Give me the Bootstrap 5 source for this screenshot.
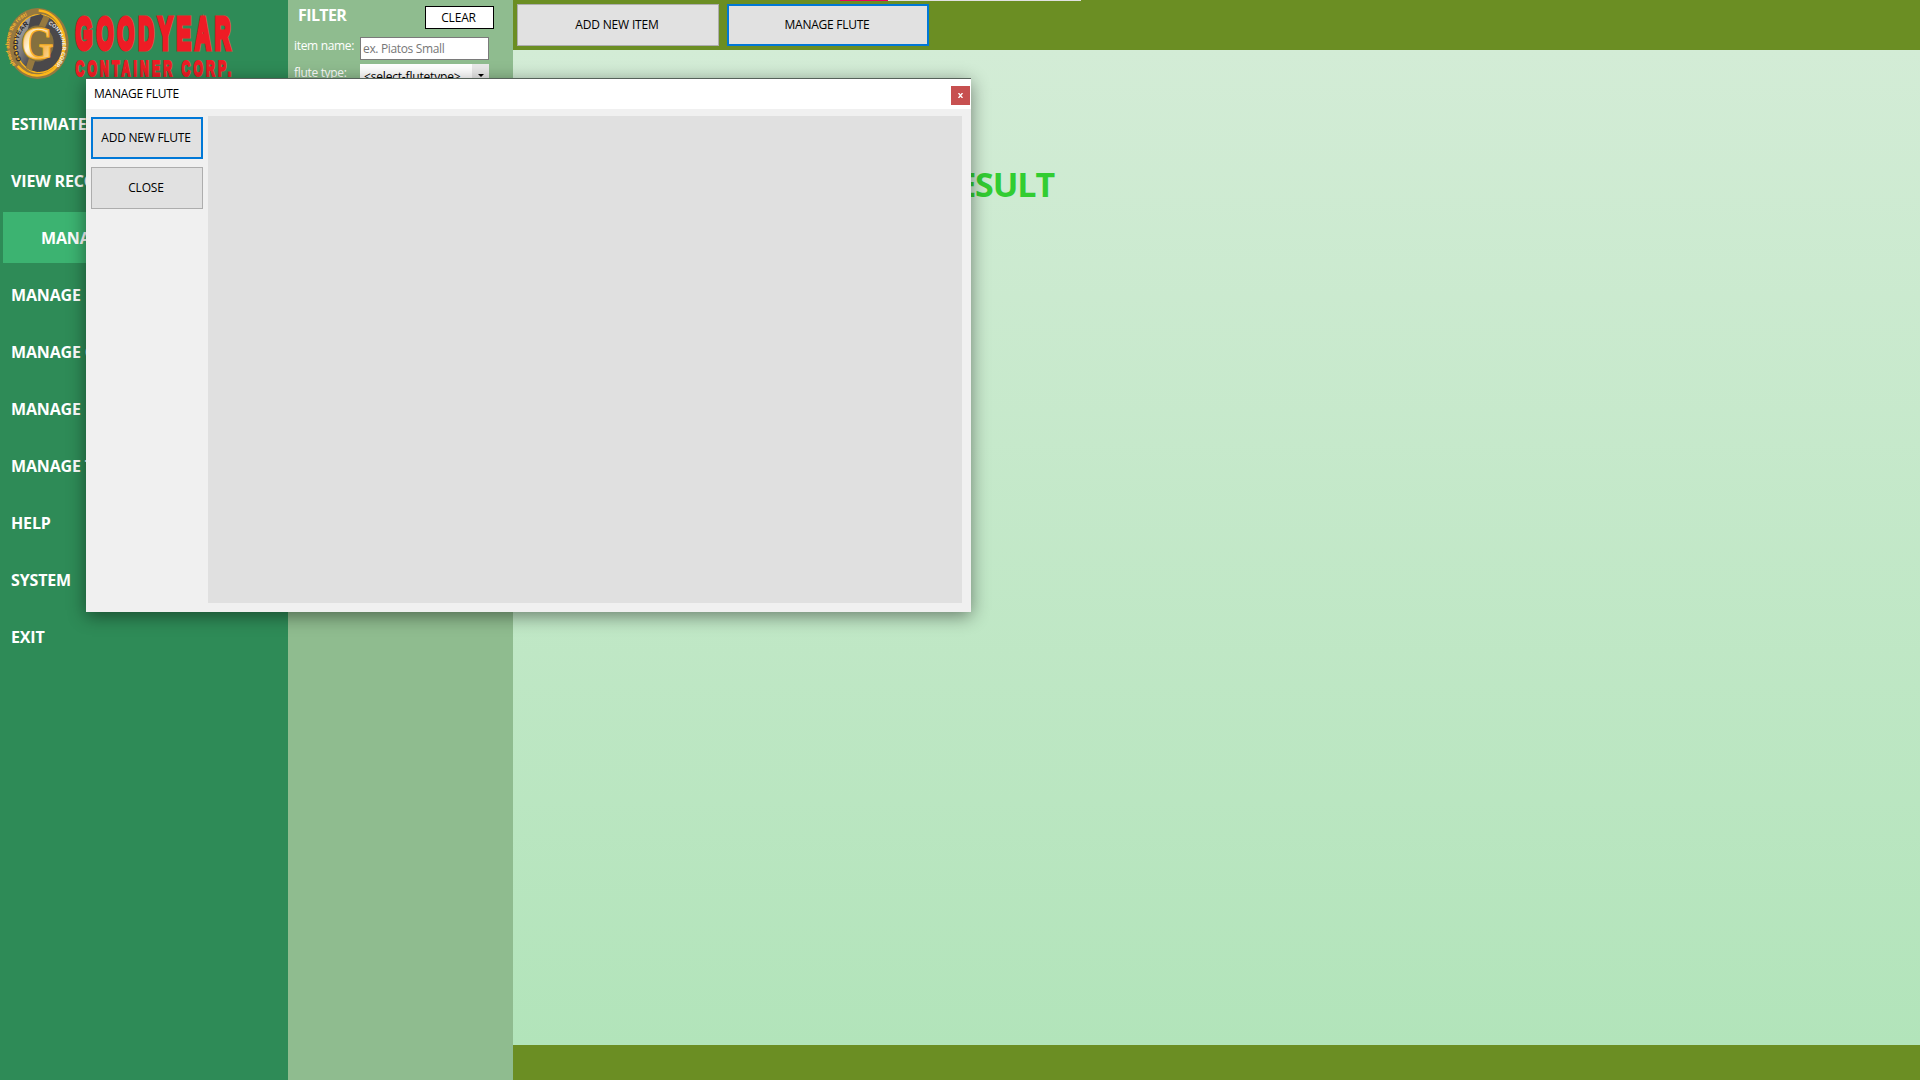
<!DOCTYPE html>
<html lang="en">
<head>
<meta charset="utf-8">
<title>Manage Flute</title>
<link href="https://cdn.jsdelivr.net/npm/bootstrap@5.3.0/dist/css/bootstrap.min.css" rel="stylesheet">
<style>
body{font-family:"Open Sans","Noto Sans",sans-serif;font-size:12px;line-height:16px;color:#000;width:1920px;height:1080px}
.sidebar{width:288px;background:#2e8b57}
.brand{height:98px}
.menu{gap:6px;padding-left:3px}
.menu a{height:51px;padding:1px 0 0 8px;color:#fff;font-weight:700;font-size:16px;letter-spacing:-.15px;white-space:nowrap;text-decoration:none}
.menu a.current{background:#3cb371;padding-left:38px}
.filters{width:225px;background:#8fbc8f;color:#fff}
.filter-head{height:37px;padding:6px 19px 0 10px}
.filter-head h1{font-size:16px;line-height:18px;font-weight:700;margin:0;letter-spacing:-.6px}
.clear-btn{width:69px;height:23px;border:1px solid #000;background:#fff;color:#000;padding:1px 2px 0 0;font-size:12px;line-height:20px;border-radius:0;letter-spacing:-.15px}
.field-row{padding-left:6px;height:27px}
.field-row label{width:66px;white-space:nowrap;letter-spacing:-.32px;padding-top:1px}
.field-row input{width:129px;height:23px;border:1px solid #7a7a7a;background:#fff;padding:0 0 1px 2px;border-radius:0;font-size:12px;outline:0;letter-spacing:-.35px}
.field-row input::placeholder{color:#777;opacity:1}
.type-select{width:129px;height:23px;background:#fff;color:#000;padding-left:4px;letter-spacing:-.18px}
.type-select>span:first-child{padding-top:2px}
.drop{width:17px;height:23px;background:#e9e9e9}
.bar{background:#6b8e23}
.topbar{height:50px;padding:4px 0 0 4px;gap:8px}
.win-btn{background:#e1e1e1;border:1px solid #adadad;border-radius:0;font-size:12px;line-height:16px;height:42px;padding:0 2px 0 0;color:#000;letter-spacing:-.18px}
.win-btn.focused{border:2px solid #0078d7;letter-spacing:-.25px}
.topbar .win-btn{width:202px}
.results{background:linear-gradient(#d3ecd6,#b2e4ba)}
.results h2{font-size:34px;line-height:46px;font-weight:700;color:#32cd32;margin:111px 0 0;width:541px;letter-spacing:-1.1px}
.bottombar{height:35px}
.progress-line{left:840px;top:0;width:241px;height:1px;background:#e1e1e1}
.progress-line div{width:48px;height:1px;background:#e6005c}
.dialog-win{left:86px;top:78px;width:885px;height:534px;background:#f0f0f0;border-top:1px solid #56625a;box-shadow:0 4px 17px rgba(0,0,0,.46)}
.title-row{height:30px;background:#fff;padding:0 1px 0 8px;letter-spacing:-.25px}
.close-x{width:19px;height:19px;background:#c75050;border:0;padding:0;margin-top:3px}
.dialog-actions{width:122px;padding:8px 5px;gap:8px}
.flute-panel{background:#e0e0e0;margin:7px 9px 9px 0}
</style>
<script src="https://cdn.jsdelivr.net/npm/bootstrap@5.3.0/dist/js/bootstrap.bundle.min.js"></script>
</head>
<body class="d-flex position-relative overflow-hidden">
<aside class="sidebar d-flex flex-column flex-shrink-0">
  <div class="brand">
    <svg width="288" height="90" viewBox="0 0 288 90">
      <defs>
        <linearGradient id="steel" x1="0" x2="1" y1="0" y2=".6"><stop offset="0" stop-color="#ccc9c7"/><stop offset=".4" stop-color="#777576"/><stop offset=".6" stop-color="#4a484a"/></linearGradient>
        <linearGradient id="gold" x1="0" y1="0" x2="1" y2="1"><stop offset="0" stop-color="#f7a51c"/><stop offset=".4" stop-color="#fff5dc"/><stop offset=".65" stop-color="#f6b955"/><stop offset="1" stop-color="#fff0cc"/></linearGradient>
        <path id="outerArc" d="M15 65 A26 30.500 0 0 1 34 14.500"/>
        <path id="leftArc" d="M21 60 A20 24 0 0 1 37 22"/>
        <path id="rightArc" d="M47.500 24.500 A20 23 0 0 1 34 70"/>
      </defs>
      <g transform="translate(.7 0)">
      <ellipse cx="37" cy="43.500" rx="31" ry="35.500" fill="#96793f"/>
      <path d="M38 10.500 A27.500 32.500 0 1 1 17 66" fill="none" stroke="#fdb71a" stroke-width="2.500"/>
      <ellipse cx="38.500" cy="43.500" rx="24" ry="29" fill="url(#steel)" stroke="#fdb71a" stroke-width="1.200"/>
      <path d="M30 17l10-3 3 2-6 14H27zM29 57h14l5 6-11 9-9-3z" fill="#4a484a"/>
      <path d="M43 15.500l6 2-8 17h-7zM29 56h7l-5 15-6-3z" fill="#96793f"/>
      <ellipse cx="37" cy="43.500" rx="16" ry="18" fill="#84703e"/>
      <text font-family="Liberation Sans" font-weight="700" font-size="5.600" fill="#f9b82e"><textPath href="#outerArc">ahead above the rest!</textPath></text>
      <text font-family="Liberation Sans" font-weight="700" font-size="6.800" fill="#29272a"><textPath href="#leftArc">GOODYEAR</textPath></text>
      <text font-family="Liberation Sans" font-weight="700" font-size="5.300" fill="#eee"><textPath href="#rightArc">CONTAINER CORP.</textPath></text>
      <text x="20.500" y="58.500" font-family="Liberation Serif" font-weight="700" font-size="46" fill="url(#gold)" stroke="#f9b023" stroke-width="1.200" textLength="32" lengthAdjust="spacingAndGlyphs">G</text>
      </g>
      <g font-family="Liberation Sans" font-weight="700" fill="#ee1c25" stroke="#ee1c25">
        <text transform="translate(75.500 48.500) scale(.5 1)" font-size="43.500" stroke-width="5" textLength="310" lengthAdjust="spacing">GOODYEAR</text>
        <text transform="translate(75.500 76) scale(.54 1)" font-size="22.500" stroke-width="2.200" textLength="288" lengthAdjust="spacing">CONTAINER CORP.</text>
      </g>
    </svg>
  </div>
  <nav class="menu d-flex flex-column">
    <a class="d-flex align-items-center" href="#">ESTIMATE</a>
    <a class="d-flex align-items-center" href="#">VIEW RECORDS</a>
    <a class="d-flex align-items-center current" href="#">MANAGE ITEM</a>
    <a class="d-flex align-items-center" href="#">MANAGE</a>
    <a class="d-flex align-items-center" href="#">MANAGE C</a>
    <a class="d-flex align-items-center" href="#">MANAGE</a>
    <a class="d-flex align-items-center" href="#">MANAGE T</a>
    <a class="d-flex align-items-center" href="#">HELP</a>
    <a class="d-flex align-items-center" href="#">SYSTEM</a>
    <a class="d-flex align-items-center" href="#">EXIT</a>
  </nav>
</aside>
<section class="filters flex-shrink-0">
  <div class="filter-head d-flex justify-content-between align-items-start">
    <h1>FILTER</h1><button class="clear-btn">CLEAR</button>
  </div>
  <div class="field-row d-flex align-items-start"><label for="itemName">item name:</label><input id="itemName" placeholder="ex. Piatos Small"></div>
  <div class="field-row d-flex align-items-start"><label>flute type:</label>
    <div class="type-select d-flex justify-content-between align-items-center"><span>&lt;select-flutetype&gt;</span>
      <span class="drop d-flex align-items-center justify-content-center"><svg width="6" height="3"><path d="M0 0h6L3 3z"/></svg></span></div>
  </div>
</section>
<main class="d-flex flex-column flex-grow-1">
  <div class="bar topbar d-flex"><button class="win-btn">ADD NEW ITEM</button><button class="win-btn focused">MANAGE FLUTE</button></div>
  <div class="results flex-grow-1 overflow-hidden"><h2 class="text-end">NO RESULT</h2></div>
  <div class="bar bottombar"></div>
</main>
<div class="progress-line position-absolute"><div></div></div>
<div class="dialog-win position-absolute d-flex flex-column">
  <div class="title-row d-flex justify-content-between align-items-center"><span>MANAGE FLUTE</span>
    <button class="close-x d-flex align-items-center justify-content-center" aria-label="Close"><svg width="5" height="5" viewBox="0 0 5 5"><path d="M.5 0l4 5M4.500 0l-4 5" stroke="#fff" stroke-width="1.300"/></svg></button></div>
  <div class="d-flex flex-grow-1">
    <div class="dialog-actions d-flex flex-column"><button class="win-btn focused">ADD NEW FLUTE</button><button class="win-btn">CLOSE</button></div>
    <div class="flute-panel flex-grow-1"></div>
  </div>
</div>
</body>
</html>
